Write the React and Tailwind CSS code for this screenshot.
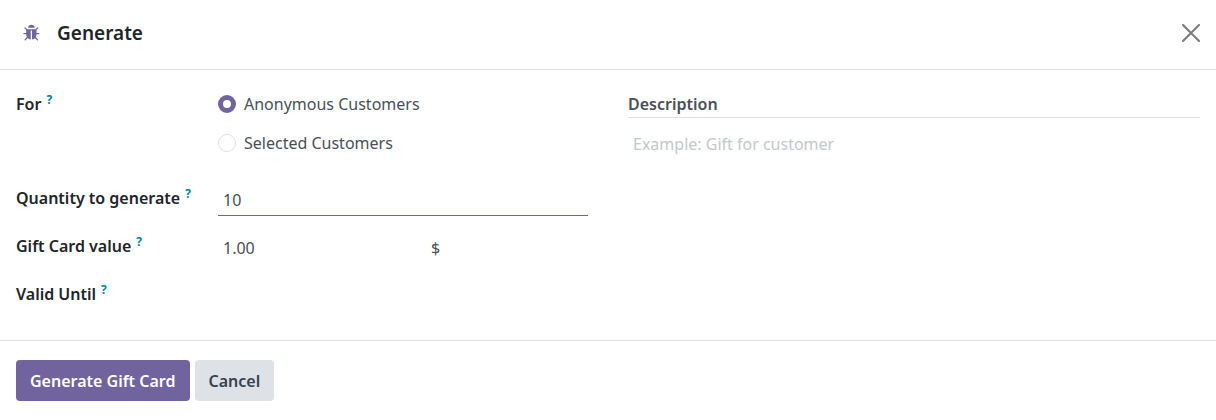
import { useState } from 'react';

function BugIcon({ className = '' }) {
  return (
    <svg viewBox="0 0 1792 1792" fill="currentColor" aria-hidden="true" className={className}>
      <path d="M1632 960q0 26-19 45t-45 19h-224q0 171-67 290l208 209q19 19 19 45t-19 45q-18 19-45 19t-45-19l-198-197q-5 5-15 13t-42 28.5-65 36.5-82 29-97 13v-896h-128v896q-51 0-101.5-13.5t-87-33-66-39-43.5-32.5l-15-14-183 207q-20 21-48 21-24 0-43-16-19-18-20.5-44.5t15.5-46.5l202-227q-58-114-58-274h-224q-26 0-45-19t-19-45 19-45 45-19h224v-294l-173-173q-19-19-19-45t19-45 45-19 45 19l173 173h844l173-173q19-19 45-19t45 19 19 45-19 45l-173 173v294h224q26 0 45 19t19 45zm-480-576h-640q0-133 93.5-226.5t226.5-93.5 226.5 93.5 93.5 226.5z" />
    </svg>
  );
}

function CloseIcon() {
  return (
    <svg viewBox="0 0 18 18" fill="none" stroke="currentColor" strokeWidth="2" strokeLinecap="round" aria-hidden="true" className="size-[18px]">
      <path d="M1 1l16 16M17 1L1 17" />
    </svg>
  );
}

function FieldLabel({ as: Tag = 'label', className = '', children, ...props }) {
  return (
    <Tag className={`flex items-start gap-[5px] font-semibold text-[#212529] ${className}`} {...props}>
      {children}
      <sup className="top-0 text-xs leading-4 font-bold text-[#0180a5]">?</sup>
    </Tag>
  );
}

function Radio({ children, ...props }) {
  return (
    <label className="flex items-center gap-2">
      <input
        type="radio"
        className="size-[18px] appearance-none rounded-full border border-[#dee2e6] bg-white checked:border-[5px] checked:border-[#71639e]"
        {...props}
      />
      {children}
    </label>
  );
}

function Field({ active = false, className = '', ...props }) {
  return (
    <input
      className={`h-8 min-w-0 border-b bg-transparent px-[5px] outline-none ${
        active ? 'border-[#71639e]' : 'border-transparent'
      } ${className}`}
      {...props}
    />
  );
}

function Button({ children, variant = 'primary' }) {
  const variants = {
    primary: 'bg-[#71639e] text-white',
    secondary: 'bg-[#dee2e6] text-[#374151]',
  };
  return (
    <button type="button" className={`h-[41px] rounded px-3.5 font-semibold ${variants[variant]}`}>
      {children}
    </button>
  );
}

export default function App() {
  const [target, setTarget] = useState('anonymous');

  return (
    <div
      role="dialog"
      aria-labelledby="dialog-title"
      className="bg-white font-['Noto_Sans',sans-serif] text-base leading-6 text-[#495057]"
    >
      <header className="flex h-[70px] items-center gap-4 border-b border-[#dee2e6] pr-4 pb-[3px] pl-[23px]">
        <button type="button" aria-label="Open developer tools" className="text-[#71639e]">
          <BugIcon className="size-[18px]" />
        </button>
        <h1 id="dialog-title" className="text-[19px] font-semibold text-[#212529]">
          Generate
        </h1>
        <button type="button" aria-label="Close" className="ml-auto text-[#7a7a7a]">
          <CloseIcon />
        </button>
      </header>

      <main className="grid grid-cols-2 gap-10 px-4 pt-[22px] pb-7">
        <div className="grid grid-cols-[202px_1fr] items-start">
          <FieldLabel as="span" id="target-label">For</FieldLabel>
          <div role="radiogroup" aria-labelledby="target-label" className="mb-[29px] flex flex-col gap-[15px]">
            <Radio name="target" checked={target === 'anonymous'} onChange={() => setTarget('anonymous')}>
              Anonymous Customers
            </Radio>
            <Radio name="target" checked={target === 'selected'} onChange={() => setTarget('selected')}>
              Selected Customers
            </Radio>
          </div>

          <FieldLabel htmlFor="quantity" className="pt-0.5">Quantity to generate</FieldLabel>
          <Field id="quantity" defaultValue="10" active className="mb-4" />

          <FieldLabel htmlFor="value" className="pt-0.5">Gift Card value</FieldLabel>
          <div className="mb-4 flex items-center">
            <Field id="value" defaultValue="1.00" className="w-[213px]" />
            <span>$</span>
          </div>

          <FieldLabel htmlFor="valid-until" className="pt-0.5">Valid Until</FieldLabel>
          <Field id="valid-until" />
        </div>

        <div>
          <label htmlFor="description" className="block border-b border-[#dee2e6] pb-px font-semibold">
            Description
          </label>
          <input
            id="description"
            placeholder="Example: Gift for customer"
            className="mt-2.5 h-8 w-full bg-transparent px-[5px] outline-none placeholder:text-[#c3c8ce]"
          />
        </div>
      </main>

      <footer className="flex gap-[5px] border-t border-[#dee2e6] px-4 py-[19px]">
        <Button>Generate Gift Card</Button>
        <Button variant="secondary">Cancel</Button>
      </footer>
    </div>
  );
}
